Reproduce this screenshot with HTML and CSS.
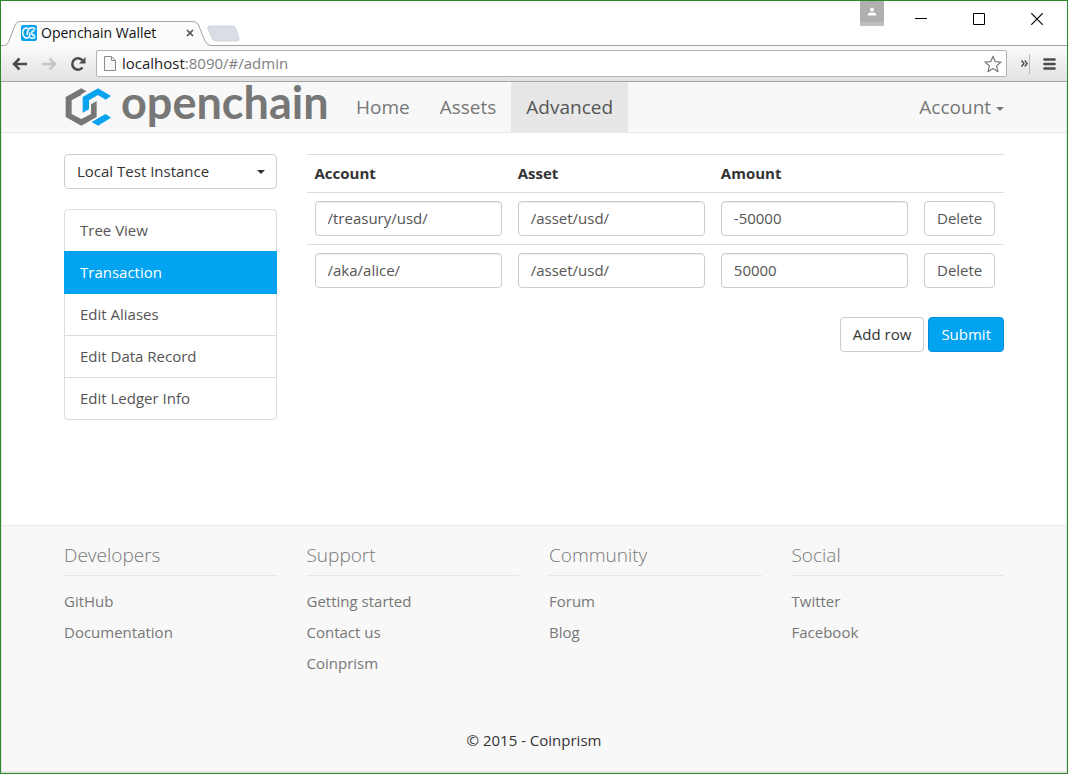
FILE: index.html
```html
<!DOCTYPE html>
<html lang="en">
<head>
<meta charset="utf-8">
<title>Openchain Wallet</title>
<link rel="stylesheet" href="styles.css">
</head>
<body>
<div class="window">
  <div class="titlebar">
    <div class="tab">
      <svg class="tab-shape" width="240" height="25" viewBox="0 0 240 25" aria-hidden="true">
        <path d="M0 24.5H3Q6 24.500 7.500 21L14 4Q15.500.5 19 .5H192Q196 .5 197.500 4L204 20Q206 24.500 210 24.500V25H0Z" fill="#fbfbfb"/>
        <path d="M0 24.500H3Q6 24.500 7.500 21L14 4Q15.500.5 19 .5H192Q196 .5 197.500 4L204 20Q206 24.500 210 24.500H240" fill="none" stroke="#a3a3a3"/>
        <path d="M209 5H231Q234 5 235 8L238 17Q239 20 236 20H215Q212 20 211 17L207 8Q206 5 209 5Z" fill="#d9dde6" stroke="#cfd3dc"/>
      </svg>
      <svg class="favicon" width="16" height="16" viewBox="0 0 16 16" aria-hidden="true">
        <rect width="16" height="16" rx="2" fill="#0aa3ee"/>
        <path d="M7 3.500C4.500 2 1.700 4 1.700 7.500S4 13.500 6.500 13 9 9.500 9 7.500M14.300 4.500C12.500 2 9 2.500 7.500 4.500S6 8.500 6.500 10M14.300 11.500C12.500 14 10 13.500 8.800 12.500M13.500 6C11.500 5 10.800 6.500 10.800 8S12 11 13.800 10" fill="none" stroke="#fff" stroke-width="1.500"/>
      </svg>
      <span class="tab-title">Openchain Wallet</span>
      <button class="icon-button tab-close" aria-label="Close tab"><svg width="8" height="8" viewBox="0 0 8 8"><path d="M1 1 7 7M7 1 1 7" stroke="#505050" stroke-width="1.700"/></svg></button>
    </div>
    <div class="window-controls">
      <button class="icon-button profile" aria-label="Profile"><svg width="10" height="10" viewBox="0 0 10 10"><circle cx="5" cy="2.500" r="2" fill="#fff"/><path d="M1 8.500V7Q1 5.500 5 5.500T9 7V8.500Z" fill="#fff"/></svg></button>
      <button class="icon-button control" aria-label="Minimize"><svg width="12" height="12" viewBox="0 0 12 12"><path d="M0 5.500H12" stroke="#000"/></svg></button>
      <button class="icon-button control" aria-label="Maximize"><svg width="12" height="12" viewBox="0 0 12 12"><path d="M.5.5H11.500V11.500H.5Z" fill="none" stroke="#000"/></svg></button>
      <button class="icon-button control" aria-label="Close"><svg width="12" height="12" viewBox="0 0 12 12"><path d="M.3.3 11.700 11.700M11.700.3.3 11.700" stroke="#000" stroke-width="1.200"/></svg></button>
    </div>
  </div>
  <div class="toolbar">
    <button class="icon-button" aria-label="Back"><svg width="16" height="14" viewBox="0 0 16 14"><path d="M15 7H3M7.500 1.500 2 7l5.500 5.500" fill="none" stroke="#4c4c4c" stroke-width="2.500"/></svg></button>
    <button class="icon-button" aria-label="Forward"><svg width="16" height="14" viewBox="0 0 16 14"><path d="M1 7H13M8.500 1.500 14 7l-5.500 5.500" fill="none" stroke="#c4c4c4" stroke-width="2.300"/></svg></button>
    <button class="icon-button" aria-label="Reload"><svg width="16" height="16" viewBox="0 0 16 16"><path d="M12.500 11.500A5.700 5.700 0 1 1 12.300 4.200" fill="none" stroke="#4c4c4c" stroke-width="2.500"/><path d="M15.500 1V7.500H9Z" fill="#4c4c4c"/></svg></button>
    <div class="address">
      <svg width="12" height="15" viewBox="0 0 12 15" aria-hidden="true"><path d="M.5.5H7.500L11.500 4.500V14.500H.5ZM7.500.5V4.500H11.500" fill="#f8f8f8" stroke="#8a8a8a"/></svg>
      <span class="url"><span class="host">localhost</span>:8090/#/admin</span>
      <button class="icon-button" aria-label="Bookmark"><svg width="18" height="18" viewBox="0 0 18 18"><path d="M9 1.200 11.200 6.600 17 7 12.600 10.900 14 16.700 9 13.600 4 16.700 5.400 10.900 1 7 6.800 6.600Z" fill="#fff" stroke="#777" stroke-width="1.200" stroke-linejoin="round"/></svg></button>
    </div>
    <button class="icon-button more" aria-label="More"><svg width="7" height="7" viewBox="0 0 7 7"><path d="M.5.5 3 3.500.5 6.500M3.700.5 6.200 3.500 3.700 6.500" fill="none" stroke="#444" stroke-width="1.300"/></svg></button>
    <button class="icon-button" aria-label="Menu"><svg width="14" height="14" viewBox="0 0 14 14"><path d="M1.500 2.500H11.500M1.500 7H11.500M1.500 11.500H11.500" stroke="#4c4c4c" stroke-width="2.600" stroke-linecap="round"/></svg></button>
  </div>

  <div class="page">
    <header class="navbar">
      <div class="container nav-row">
        <a class="brand" href="#">
          <svg width="47" height="38" viewBox="14 12 139 114" aria-hidden="true">
            <path d="M65 13 18 39V99L65 125 111 99V51L94 61V90L65 105 36 90V49L65 33V31L80 22Z" fill="#777"/>
            <path d="M69 86V39L115 13 154 36 138 47 115 33 88 49V76ZM96 114 115 125 154 101 138 90 115 103Z" fill="#0aa3f0"/>
          </svg>
          <span class="brand-name">openchain</span>
        </a>
        <nav class="nav">
          <a href="#">Home</a>
          <a href="#">Assets</a>
          <a class="active" href="#">Advanced</a>
        </nav>
        <a class="account" href="#">Account <span class="caret"></span></a>
      </div>
    </header>

    <main class="container main-grid">
      <aside class="sidebar">
        <div class="instance">
          <select aria-label="Instance"><option>Local Test Instance</option></select>
          <span class="caret"></span>
        </div>
        <nav class="list">
          <a href="#">Tree View</a>
          <a class="active" href="#">Transaction</a>
          <a href="#">Edit Aliases</a>
          <a href="#">Edit Data Record</a>
          <a href="#">Edit Ledger Info</a>
        </nav>
      </aside>
      <section class="content">
        <table class="records">
          <thead>
            <tr><th>Account</th><th>Asset</th><th>Amount</th><th class="actions"></th></tr>
          </thead>
          <tbody>
            <tr>
              <td><input aria-label="Account" value="/treasury/usd/"></td>
              <td><input aria-label="Asset" value="/asset/usd/"></td>
              <td><input aria-label="Amount" value="-50000"></td>
              <td><button class="btn muted">Delete</button></td>
            </tr>
            <tr>
              <td><input aria-label="Account" value="/aka/alice/"></td>
              <td><input aria-label="Asset" value="/asset/usd/"></td>
              <td><input aria-label="Amount" value="50000"></td>
              <td><button class="btn muted">Delete</button></td>
            </tr>
          </tbody>
        </table>
        <div class="form-actions">
          <button class="btn">Add row</button>
          <button class="btn primary">Submit</button>
        </div>
      </section>
    </main>

    <footer class="footer">
      <div class="container footer-grid">
        <section><h2>Developers</h2><ul><li><a href="#">GitHub</a></li><li><a href="#">Documentation</a></li></ul></section>
        <section><h2>Support</h2><ul><li><a href="#">Getting started</a></li><li><a href="#">Contact us</a></li><li><a href="#">Coinprism</a></li></ul></section>
        <section><h2>Community</h2><ul><li><a href="#">Forum</a></li><li><a href="#">Blog</a></li></ul></section>
        <section><h2>Social</h2><ul><li><a href="#">Twitter</a></li><li><a href="#">Facebook</a></li></ul></section>
      </div>
      <p class="copyright">© 2015 - Coinprism</p>
    </footer>
  </div>
</div>
</body>
</html>
```

FILE: styles.css
```css
* { box-sizing: border-box; }

body {
  margin: 0;
  background: #fff;
  color: #333;
  font: 15px/21px "Open Sans", "Noto Sans", sans-serif;
}

a { color: inherit; text-decoration: none; }
button, input, select { font: inherit; color: inherit; }

.window {
  display: flex;
  flex-direction: column;
  min-height: 100vh;
  border: 1px solid #2a882a;
}

.icon-button {
  display: flex;
  align-items: center;
  justify-content: center;
  padding: 0;
  border: 0;
  background: none;
}

/* Browser frame */
.titlebar {
  display: flex;
  justify-content: space-between;
  height: 45px;
  border-bottom: 1px solid #a3a3a3;
}

.tab {
  position: relative;
  display: flex;
  align-items: center;
  align-self: flex-end;
  width: 200px;
  height: 24px;
  padding: 0 6px 0 20px;
  color: #111;
  font: 14px/20px "Open Sans", sans-serif;
}
.tab-shape { position: absolute; left: 0; top: 0; }
.favicon, .tab-title, .tab-close { position: relative; }
.tab-title { flex: 1; margin-left: 4px; white-space: nowrap; }
.tab-close { width: 11px; height: 16px; }

.window-controls { display: flex; padding-right: 1px; }
.profile { width: 24px; height: 25px; background: #b0b0b0; border-bottom: 4px solid #c0c0c0; }
.control { width: 58px; height: 36px; }
.window-controls .profile { margin-right: 8px; }

.toolbar {
  display: flex;
  align-items: center;
  gap: 13px;
  height: 36px;
  padding: 0 10px 0 11px;
  background: linear-gradient(#fafafa, #e2e2e2);
  border-bottom: 1px solid #a6a6a6;
}
.address {
  display: flex;
  flex: 1;
  align-items: center;
  gap: 6px;
  height: 27px;
  margin-left: -3px;
  padding: 0 4px 0 7px;
  background: #fff;
  border: 1px solid #b4b4b4;
  border-radius: 2px;
}
.url { flex: 1; color: #808080; font-size: 15px; }
.host { color: #222; }
.more { width: 10px; height: 20px; border-right: 1px solid #bbb; }

/* Page */
.page {
  display: flex;
  flex: 1;
  flex-direction: column;
  border: solid #e4e4e4;
  border-width: 0 1px 2px;
}
.container { width: 100%; max-width: 940px; margin: 0 auto; }

.navbar { background: #f8f8f8; border-bottom: 1px solid #e7e7e7; }
.nav-row { display: flex; height: 50px; color: #777; font-size: 19px; }
.brand {
  display: flex;
  align-items: center;
  gap: 10px;
  width: 277px;
}
.brand-name { padding-bottom: 10px; font: 700 45px/40px Lato, sans-serif; }
.nav { display: flex; flex: 1; }
.nav a { padding: 15px 15px 14px; }
.nav .active { background: #e7e7e7; color: #555; }
.account { padding: 15px 0 14px; }

.caret {
  display: inline-block;
  border: 4px solid transparent;
  border-top-color: currentColor;
  border-bottom: 0;
  vertical-align: middle;
}

.main-grid, .footer-grid {
  display: grid;
  grid-template-columns: repeat(4, 1fr);
  gap: 30px;
}
.main-grid { padding: 21px 0 105px; }
.content { grid-column: span 3; }

.instance { position: relative; margin-bottom: 20px; }
.instance select {
  width: 100%;
  height: 35px;
  padding: 0 12px;
  border: 1px solid #ccc;
  border-radius: 4px;
  background: #fff;
  appearance: none;
}
.instance .caret { position: absolute; right: 12px; top: 16px; }

.list { border: 1px solid #ddd; border-radius: 4px; color: #555; }
.list a { display: block; padding: 10px 15px; border-bottom: 1px solid #ddd; }
.list a:last-child { border-bottom: 0; }
.list .active {
  margin: -1px -1px 0;
  padding: 11px 16px 10px;
  border-color: #02a3f1;
  background: #02a3f1;
  color: #fff;
}

.records { width: 100%; table-layout: fixed; border-collapse: separate; border-spacing: 0; }
.records th, .records td { padding: 8px; border-top: 1px solid #ddd; text-align: left; }
.records th { font-weight: 700; }
.records .actions { width: 88px; }
.records input {
  display: block;
  width: 100%;
  height: 35px;
  padding: 0 12px 2px;
  border: 1px solid #ccc;
  border-radius: 4px;
  background: #fff;
  box-shadow: inset 0 1px 1px rgba(0, 0, 0, .075);
  color: #555;
}

.btn {
  display: block;
  height: 35px;
  padding: 0 12px;
  border: 1px solid #ccc;
  border-radius: 4px;
  background: #fff;
}
.muted { color: #555; }
.primary { border-color: #0290d8; background: #02a3f1; color: #fff; }
.form-actions { display: flex; justify-content: flex-end; gap: 4px; margin-top: 21px; }

.footer { flex: 1; background: #f8f8f8; border-top: 1px solid #e7e7e7; color: #777; }
.footer-grid { min-height: 204px; padding-top: 18px; }
.footer h2 {
  margin: 0 0 15px;
  padding-bottom: 9px;
  border-bottom: 1px solid #e7e7e7;
  font-size: 19px;
  font-weight: 300;
  line-height: 22px;
}
.footer ul { display: flex; flex-direction: column; gap: 10px; margin: 0; padding: 0; list-style: none; }
.copyright { margin: 0; padding-bottom: 20px; color: #333; text-align: center; }
```
